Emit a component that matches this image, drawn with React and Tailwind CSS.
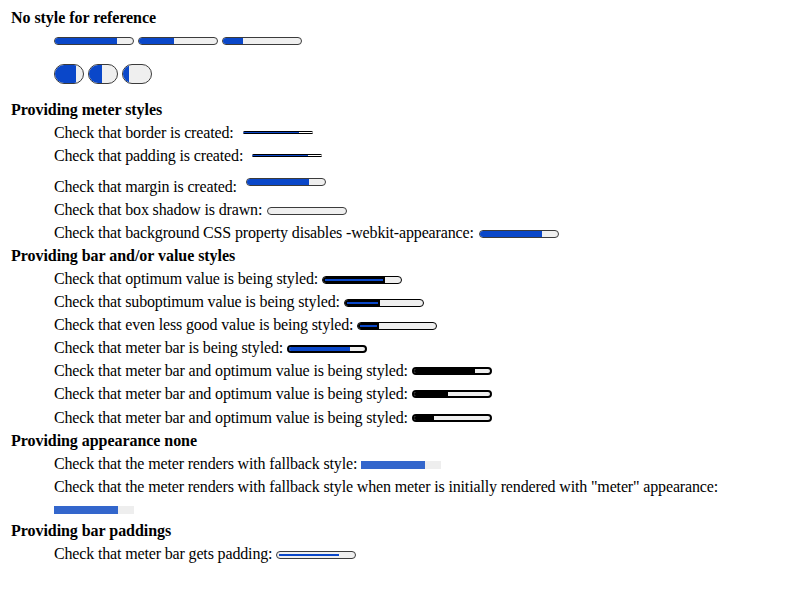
import React from 'react';

const BLUE = 'bg-[#0a47c9]';

// plain rounded meter used by most of the rows
const Meter = ({ value = 0.8, className = '' }) => (
  <div
    className={`flex h-[8px] w-[80px] overflow-hidden rounded-full border border-[#3b3b3b] bg-[#efefef] ${className}`}
  >
    <div className={`h-full ${BLUE}`} style={{ width: `${value * 100}%` }} />
  </div>
);

const Pill = ({ value }) => (
  <div className="flex h-[20px] w-[30px] overflow-hidden rounded-full border border-[#3b3b3b] bg-[#efefef]">
    <div className={`h-full ${BLUE}`} style={{ width: `${value * 100}%` }} />
  </div>
);

const ThinMeter = ({ className = '' }) => (
  <div className={`flex h-[3px] w-[70px] overflow-hidden rounded-full border-y border-black bg-white ${className}`}>
    <div className={`h-full w-[80%] ${BLUE}`} />
  </div>
);

// styled optimum: black track around a thin blue value line
const DarkValue = ({ value, className = '' }) => (
  <div className={`flex h-[8px] w-[80px] overflow-hidden rounded-full border border-black bg-[#efefef] ${className}`}>
    <div className="flex h-full items-center bg-black px-[2px]" style={{ width: `${value * 100}%` }}>
      <div className={`h-[2px] w-full ${BLUE}`} />
    </div>
  </div>
);

const BlackBar = ({ value }) => (
  <div className="ml-1 flex h-[8px] w-[80px] overflow-hidden rounded-full border-2 border-black bg-[#efefef]">
    <div className="h-full bg-black" style={{ width: `${value * 100}%` }} />
  </div>
);

const Flat = ({ className = '' }) => (
  <div className={`flex h-[8px] w-[80px] bg-[#eeeeee] ${className}`}>
    <div className="h-full w-[80%] bg-[#3366cc]" />
  </div>
);

const Row = ({ children, className = 'h-[23px]' }) => (
  <div className={`ml-[43px] flex items-center whitespace-nowrap tracking-[-0.15px] ${className}`}>{children}</div>
);

const Heading = ({ children, className = '' }) => (
  <div className={`flex h-[23px] items-center font-bold tracking-[-0.05px] ${className}`}>{children}</div>
);

export default function App() {
  return (
    <div
      className="min-h-[600px] w-[800px] bg-white pl-[11px] pt-[6px] text-[16px] text-black"
      style={{ fontFamily: '"Liberation Serif", "Times New Roman", serif' }}
    >
      <Heading>No style for reference</Heading>
      <Row>
        <div className="flex gap-[4px] pt-[1px]">
          <Meter value={0.8} />
          <Meter value={0.45} />
          <Meter value={0.26} />
        </div>
      </Row>
      <Row className="mt-[10px] h-[23px]">
        <div className="flex gap-[4px] pt-[1px]">
          <Pill value={0.75} />
          <Pill value={0.47} />
          <Pill value={0.23} />
        </div>
      </Row>

      <Heading className="mt-[13px]">Providing meter styles</Heading>
      <Row>
        <span>Check that border is created:</span>
        <ThinMeter className="ml-[9px]" />
      </Row>
      <Row>
        <span>Check that padding is created:</span>
        <ThinMeter className="ml-[9px]" />
      </Row>
      <Row className="h-[31px] items-end">
        <span className="leading-[23px]">Check that margin is created:</span>
        <Meter value={0.8} className="mb-[12px] ml-[9px] self-end" />
      </Row>
      <Row>
        <span>Check that box shadow is drawn:</span>
        <Meter value={0} className="ml-[5px] mt-[2px]" />
      </Row>
      <Row>
        <span>Check that background CSS property disables -webkit-appearance:</span>
        <Meter value={0.8} className="ml-[5px] mt-[2px]" />
      </Row>

      <Heading>Providing bar and/or value styles</Heading>
      <Row>
        <span>Check that optimum value is being styled:</span>
        <DarkValue value={0.8} className="ml-1 mt-[2px]" />
      </Row>
      <Row>
        <span>Check that suboptimum value is being styled:</span>
        <DarkValue value={0.45} className="ml-1 mt-[2px]" />
      </Row>
      <Row>
        <span>Check that even less good value is being styled:</span>
        <DarkValue value={0.26} className="ml-1 mt-[2px]" />
      </Row>
      <Row>
        <span>Check that meter bar is being styled:</span>
        <div className="ml-1 mt-[2px] flex h-[8px] w-[80px] overflow-hidden rounded-full border-2 border-black bg-[#efefef]">
          <div className={`h-full w-[80%] ${BLUE}`} />
        </div>
      </Row>
      <Row>
        <span>Check that meter bar and optimum value is being styled:</span>
        <BlackBar value={0.8} />
      </Row>
      <Row className="h-[24px]">
        <span>Check that meter bar and optimum value is being styled:</span>
        <BlackBar value={0.45} />
      </Row>
      <Row>
        <span>Check that meter bar and optimum value is being styled:</span>
        <BlackBar value={0.26} />
      </Row>

      <Heading>Providing appearance none</Heading>
      <Row>
        <span>Check that the meter renders with fallback style:</span>
        <Flat className="ml-1 mt-[2px]" />
      </Row>
      <Row>
        <span>Check that the meter renders with fallback style when meter is initially rendered with "meter" appearance:</span>
      </Row>
      <Row className="h-[21px]">
        <Flat className="mt-[3px]" />
      </Row>

      <Heading>Providing bar paddings</Heading>
      <Row className="h-[24px]">
        <span>Check that meter bar gets padding:</span>
        <div className="ml-1 mt-[2px] flex h-[8px] w-[80px] items-center rounded-full border border-[#3b3b3b] bg-[#efefef] px-[2px]">
          <div className={`h-[2px] w-[80%] ${BLUE}`} />
        </div>
      </Row>
    </div>
  );
}
